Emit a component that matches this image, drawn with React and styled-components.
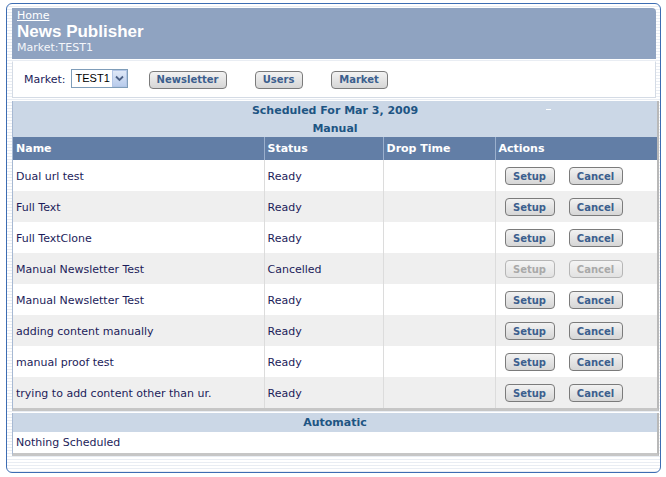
import React from "react";
import styled, { createGlobalStyle, css } from "styled-components";

const Global = createGlobalStyle`
  html, body { margin: 0; padding: 0; background: #fff; }
  body { font-family: "DejaVu Sans", Verdana, sans-serif; font-size: 11px; color: #1c1c5a; }
`;

const Frame = styled.div`
  box-sizing: border-box;
  margin: 3px 0 0 6px;
  width: 655px;
  height: 470px;
  border: 1px solid #3d6db3;
  border-radius: 6px;
  padding: 4px 3px 0 5px;
  background: repeating-linear-gradient(to bottom, #fff 0, #fff 2px, #e9edf3 2px, #e9edf3 3px);
  display: flex;
  flex-direction: column;
`;

const Header = styled.div`
  width: 644px;
  height: 51px;
  box-sizing: border-box;
  background: #8fa3c1;
  border-top-right-radius: 4px;
  padding: 2px 5px 0;
  color: #fff;
  display: flex;
  flex-direction: column;
`;

const HomeLink = styled.a`
  color: #fff;
  text-decoration: underline;
  font-size: 11px;
  line-height: 12px;
`;

const Title = styled.div`
  font-family: "Liberation Sans", Arial, sans-serif;
  font-size: 17px;
  font-weight: bold;
  line-height: 19px;
`;

const Sub = styled.div`
  font-size: 11px;
  line-height: 13px;
  color: #f4f6fa;
`;

const Toolbar = styled.div`
  margin-top: 2px;
  width: 644px;
  height: 37px;
  box-sizing: border-box;
  background: #fff;
  border: 1px solid #d4dbe5;
  border-top-color: #fff;
  display: flex;
  align-items: center;
  padding: 0 0 0 11px;
`;

const Label = styled.span`
  color: #1c1c5a;
  margin-right: 5px;
`;

const Select = styled.div`
  display: flex;
  align-items: stretch;
  height: 19px;
  box-sizing: border-box;
  border: 1px solid #7f9db9;
  width: 57px;
  flex: none;
  margin-right: 21px;
  margin-top: -3px;
  background: #fff;
`;

const SelectText = styled.span`
  flex: 1;
  min-width: 0;
  overflow: hidden;
  font-family: "Liberation Sans", Arial, sans-serif;
  font-size: 11px;
  color: #000;
  padding-left: 4px;
  line-height: 16px;
`;

const SelectArrow = styled.span`
  flex: none;
  width: 15px;
  box-sizing: border-box;
  background: linear-gradient(#dfe8f7, #b9ccec);
  border: 1px solid #b3c6e6;
  display: flex;
  align-items: center;
  justify-content: center;
`;

const Btn = styled.button`
  font-family: "DejaVu Sans", Verdana, sans-serif;
  font-size: 10px;
  font-weight: bold;
  color: #3c5f8e;
  background: linear-gradient(#f2f2f2, #d6d6d6);
  border: 1px solid #7b7b7b;
  border-radius: 4px;
  height: 18px;
  padding: 0;
  box-sizing: border-box;
  flex: none;
  width: ${(p) => p.$w}px;
  margin-right: ${(p) => p.$mr || 0}px;
  line-height: 15px;
  ${(p) =>
    p.disabled &&
    css`
      color: #a9a9a9;
      border-color: #b6b6b6;
      background: linear-gradient(#f4f4f4, #e2e2e2);
    `}
`;

const Panel = styled.div`
  margin-top: 3px;
  width: 647px;
  box-sizing: border-box;
  border-left: 1px solid #a7b9d3;
  border-right: 2px solid #b9b9b9;
  border-bottom: 3px solid #c6c6c6;
  background: #cbd7e6;
`;

const PanelTitle = styled.div`
  text-align: center;
  font-weight: bold;
  color: #1e5583;
  line-height: ${(p) => p.$lh || 18}px;
  position: relative;
`;

const Dash = styled.span`
  position: absolute;
  left: 533px;
  top: 8px;
  width: 5px;
  height: 1px;
  background: #fff;
`;

const Table = styled.table`
  width: 644px;
  border-collapse: collapse;
  table-layout: fixed;
`;

const Th = styled.th`
  background: #627ea6;
  color: #fff;
  text-align: left;
  font-weight: bold;
  height: 23px;
  padding: 0 0 0 3px;
  border-left: 1px solid #9bb0cd;
  &:first-child { border-left: none; }
`;

const Tr = styled.tr`
  background: ${(p) => (p.$alt ? "#efefef" : "#fff")};
`;

const Td = styled.td`
  height: 30px;
  padding: 1px 0 0 3px;
  border-left: 1px solid #dcdcdc;
  color: #1c1c5a;
  white-space: nowrap;
  overflow: hidden;
  &:first-child { border-left: none; }
`;

const ActionCell = styled(Td)`
  padding-left: 9px;
`;

const Auto = styled.div`
  margin-top: 2px;
  width: 647px;
  box-sizing: border-box;
  border-left: 1px solid #a7b9d3;
  border-right: 2px solid #b9b9b9;
  border-bottom: 3px solid #c6c6c6;
`;

const AutoTitle = styled.div`
  background: #cbd7e6;
  text-align: center;
  font-weight: bold;
  color: #1e5583;
  height: 19px;
  line-height: 19px;
`;

const AutoBody = styled.div`
  background: #fff;
  height: 21px;
  line-height: 21px;
  padding-left: 3px;
  color: #1c1c5a;
`;

const rows = [
  ["Dual url test", "Ready"],
  ["Full Text", "Ready"],
  ["Full TextClone", "Ready"],
  ["Manual Newsletter Test", "Cancelled", true],
  ["Manual Newsletter Test", "Ready"],
  ["adding content manually", "Ready"],
  ["manual proof test", "Ready"],
  ["trying to add content other than ur.", "Ready"],
];

export default function App() {
  return (
    <>
      <Global />
      <Frame>
        <Header>
          <HomeLink href="#">Home</HomeLink>
          <Title>News Publisher</Title>
          <Sub>Market:TEST1</Sub>
        </Header>
        <Toolbar>
          <Label>Market:</Label>
          <Select>
            <SelectText>TEST1</SelectText>
            <SelectArrow>
              <svg width="9" height="7" viewBox="0 0 9 7">
                <path d="M1 1.5 L4.5 5 L8 1.5" stroke="#4d6185" strokeWidth="1.8" fill="none" />
              </svg>
            </SelectArrow>
          </Select>
          <Btn $w={78} $mr={28}>Newsletter</Btn>
          <Btn $w={48} $mr={28}>Users</Btn>
          <Btn $w={57}>Market</Btn>
        </Toolbar>
        <Panel>
          <PanelTitle $lh={19}>
            Scheduled For Mar 3, 2009
            <Dash />
          </PanelTitle>
          <PanelTitle $lh={17}>Manual</PanelTitle>
          <Table>
            <colgroup>
              <col style={{ width: 251 }} />
              <col style={{ width: 119 }} />
              <col style={{ width: 112 }} />
              <col style={{ width: 162 }} />
            </colgroup>
            <thead>
              <tr>
                <Th>Name</Th>
                <Th>Status</Th>
                <Th>Drop Time</Th>
                <Th>Actions</Th>
              </tr>
            </thead>
            <tbody>
              {rows.map(([name, status, dis], i) => (
                <Tr key={i} $alt={i % 2 === 1}>
                  <Td>{name}</Td>
                  <Td>{status}</Td>
                  <Td />
                  <ActionCell>
                    <Btn $w={50} $mr={14} disabled={dis}>Setup</Btn>
                    <Btn $w={54} disabled={dis}>Cancel</Btn>
                  </ActionCell>
                </Tr>
              ))}
            </tbody>
          </Table>
        </Panel>
        <Auto>
          <AutoTitle>Automatic</AutoTitle>
          <AutoBody>Nothing Scheduled</AutoBody>
        </Auto>
      </Frame>
    </>
  );
}
